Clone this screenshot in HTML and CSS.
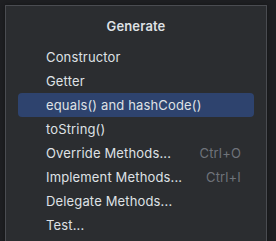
FILE: index.html
```html
<!DOCTYPE html>
<html>
<head>
<meta charset="utf-8">
<link rel="stylesheet" href="styles.css">
</head>
<body>
<div class="popup">
  <div class="title">Generate</div>
  <ul class="list">
    <li class="item"><span>Constructor</span></li>
    <li class="item"><span>Getter</span></li>
    <li class="item selected"><span>equals() and hashCode()</span></li>
    <li class="item"><span>toString()</span></li>
    <li class="item"><span>Override Methods...</span><span class="key">Ctrl+O</span></li>
    <li class="item"><span>Implement Methods...</span><span class="key">Ctrl+I</span></li>
    <li class="item"><span>Delegate Methods...</span></li>
    <li class="item"><span>Test...</span></li>
  </ul>
</div>
</body>
</html>
```
FILE: styles.css
```css
html, body {
  margin: 0;
  padding: 0;
  background: #1e1f22;
  overflow: hidden;
  height: 241px;
}
body {
  font-family: Inter, "Noto Sans", sans-serif;
  font-size: 13px;
  letter-spacing: 0.15px;
  color: #dfe1e5;
}
.popup {
  margin: 5px 0 0 5px;
  width: 260px;
  height: 260px;
  background: #2b2d30;
  border: 1px solid #4a4c51;
  padding-top: 8px;
  box-sizing: content-box;
  box-shadow: 0 0 4px rgba(0,0,0,0.4);
}
.title {
  height: 24px;
  line-height: 25px;
  text-align: center;
  font-weight: 600;
  color: #dfe1e5;
}
.list {
  list-style: none;
  margin: 7px 12px 0 12px;
  padding: 0;
}
.item {
  height: 24px;
  line-height: 24px;
  padding: 0 13px 0 28px;
  display: flex;
  justify-content: space-between;
  border-radius: 4px;
}
.item.selected {
  background: #2e436e;
}
.key {
  color: #6f737a;
}
```
